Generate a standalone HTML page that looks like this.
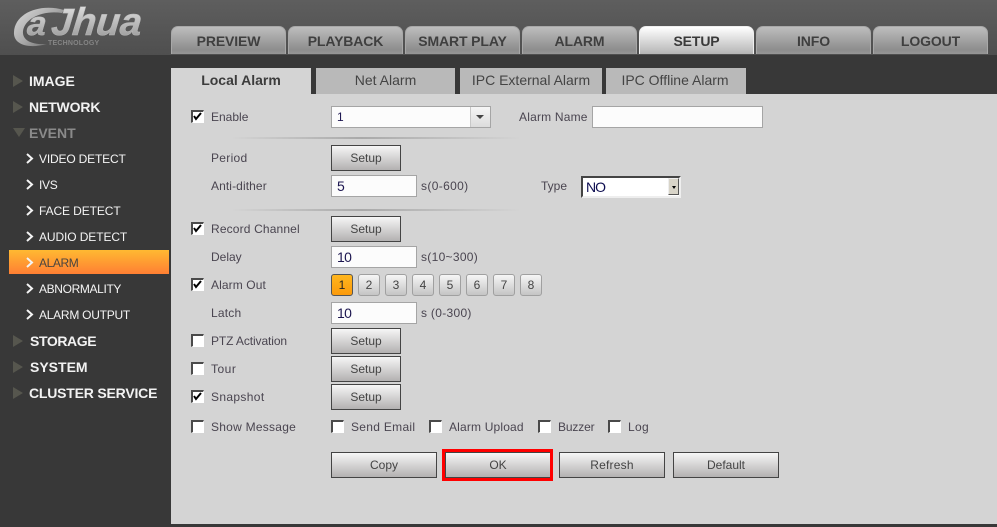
<!DOCTYPE html>
<html><head><meta charset="utf-8"><style>
html,body{margin:0;padding:0}
body{width:997px;height:527px;overflow:hidden;position:relative;background:#383838;font-family:"Liberation Sans",sans-serif;font-size:12px;color:#4a4550}
div,span.a,svg{position:absolute}
#hdr{left:0;top:0;width:997px;height:55px;background:linear-gradient(#5e5e5e,#4f4f4f)}
.tt{top:26px;width:115px;height:28px;box-sizing:border-box;border:1px solid #a8a8a8;border-bottom:none;border-radius:7px 7px 0 0;background:linear-gradient(#bdbdbd,#8d8d8d 85%,#969696);font:bold 14px/28px "Liberation Sans",sans-serif;letter-spacing:-.12px;color:#3f3f3f;text-align:center}
.tt.on{background:linear-gradient(#fff,#b5b5b5);border-color:#eee;color:#3a3a3a}
#panel{left:171px;top:94px;width:826px;height:430px;background:#d4d4d4}
.st{top:68px;height:26px;background:#b9b9b9;font:14px/25px "Liberation Sans",sans-serif;color:#444;text-align:center}
.m{left:29px;font:bold 14px/16px "Liberation Sans",sans-serif;color:#f2f2f2;white-space:nowrap}
.tri{width:0;height:0;border-left:10px solid #56564e;border-top:6px solid transparent;border-bottom:6px solid transparent;left:13px}
.s{left:39px;font:12px/16px "Liberation Sans",sans-serif;color:#f4f4f4;white-space:nowrap}
.l{font:12px/14px "Liberation Sans",sans-serif;color:#4a4550;white-space:nowrap}
.cb{width:10px;height:10px;background:#fff;border:2px solid #4a4a4a;border-right:1px solid #fff;border-bottom:1px solid #fff}
.btn{box-sizing:border-box;border:1px solid #444;background:linear-gradient(#f6f6f6,#b3b1b1);font:12px/24px "Liberation Sans",sans-serif;color:#444;text-align:center}
.in{box-sizing:border-box;border:1px solid #a5a5a5;background:#fcfcfc;height:22px;font:12px/20px "Liberation Sans",sans-serif;color:#1c1650;padding-left:5px}
.in.b{font-size:14px;letter-spacing:-.6px}
.n{top:274px;width:22px;height:22px;box-sizing:border-box;border:1px solid #a0a0a0;border-radius:3px;background:linear-gradient(#f6f6f6,#c4c4c4);font:12px/20px "Liberation Sans",sans-serif;color:#444;text-align:center}
.hr{height:2px;left:231px;width:290px;background:linear-gradient(90deg,#d4d4d4,#a9a9a9 45%,#b5b5b5 60%,#d4d4d4)}
</style></head><body>
<div id="hdr"></div>
<svg style="left:0;top:0" width="160" height="55">
<defs>
<linearGradient id="g" x1="0" y1="0" x2="0" y2="1"><stop offset="0" stop-color="#e6e6e6"/><stop offset="1" stop-color="#929292"/></linearGradient>
<linearGradient id="g2" gradientUnits="userSpaceOnUse" x1="14" y1="8" x2="50" y2="46"><stop offset="0" stop-color="#dcdcdc"/><stop offset=".6" stop-color="#a8a8a8"/><stop offset="1" stop-color="#6e6e6e"/></linearGradient>
</defs>
<path d="M64 10C40 3 15 13 14 32C13 45 29 49 47 44C33 45 22 41 23 31C25 18 43 10 62 13Z" fill="url(#g2)"/>
<g font-family="Liberation Sans" font-weight="bold" font-style="italic" fill="url(#g)" stroke="#b8b8b8" stroke-width=".5" transform="skewX(-6)">
<text x="30" y="35" font-size="34">a</text>
<text x="54" y="35" font-size="38">J</text>
<text x="75" y="35" font-size="39">hua</text>
</g>
<text x="48" y="45" font-family="Liberation Sans" font-weight="bold" font-size="7" fill="#858585" letter-spacing=".2">TECHNOLOGY</text>
</svg>

<div class="tt" style="left:171px">PREVIEW</div>
<div class="tt" style="left:288px">PLAYBACK</div>
<div class="tt" style="left:405px">SMART PLAY</div>
<div class="tt" style="left:522px">ALARM</div>
<div class="tt on" style="left:639px">SETUP</div>
<div class="tt" style="left:756px">INFO</div>
<div class="tt" style="left:873px">LOGOUT</div>

<div class="tri" style="top:75px"></div><div class="m" style="top:73px">IMAGE</div>
<div class="tri" style="top:101px"></div><div class="m" style="top:99px;letter-spacing:-.15px">NETWORK</div>
<div style="left:13px;top:128px;width:0;height:0;border-top:9px solid #56564e;border-left:6px solid transparent;border-right:6px solid transparent"></div><div class="m" style="top:125px;color:#8a8a8a">EVENT</div>
<div style="left:9px;top:250px;width:160px;height:24px;background:linear-gradient(#ffb932,#ff7f33)"></div>
<svg style="left:0;top:0" width="40" height="330" fill="none" stroke="#f4f4f4" stroke-width="2">
<path d="M27 154l5 4.5-5 4.5M27 180l5 4.5-5 4.5M27 206l5 4.5-5 4.5M27 232l5 4.5-5 4.5M27 258l5 4.5-5 4.5M27 284l5 4.5-5 4.5M27 310l5 4.5-5 4.5"/>
</svg>
<div class="s" style="top:151px;letter-spacing:-.17px">VIDEO DETECT</div>
<div class="s" style="top:177px;letter-spacing:-.3px">IVS</div>
<div class="s" style="top:203px;letter-spacing:-.1px">FACE DETECT</div>
<div class="s" style="top:229px;letter-spacing:-.1px">AUDIO DETECT</div>
<div class="s" style="top:255px;color:#4a4540;letter-spacing:-.4px">ALARM</div>
<div class="s" style="top:281px;letter-spacing:-.36px">ABNORMALITY</div>
<div class="s" style="top:307px;letter-spacing:-.25px">ALARM OUTPUT</div>
<div class="tri" style="top:335px"></div><div class="m" style="top:333px;left:30px;letter-spacing:-.4px">STORAGE</div>
<div class="tri" style="top:361px"></div><div class="m" style="top:359px;left:30px">SYSTEM</div>
<div class="tri" style="top:387px"></div><div class="m" style="top:385px;letter-spacing:-.2px">CLUSTER SERVICE</div>

<div id="panel"></div>
<div class="st" style="left:171px;width:140px;background:#d4d4d4;font-weight:bold;color:#3c3c3c;height:26px;line-height:25px">Local Alarm</div>
<div class="st" style="left:316px;width:139px">Net Alarm</div>
<div class="st" style="left:460px;width:142px">IPC External Alarm</div>
<div class="st" style="left:606px;width:140px;text-indent:-2px">IPC Offline Alarm</div>

<div class="cb" style="left:191px;top:110px"></div>
<div class="cb" style="left:191px;top:222px"></div>
<div class="cb" style="left:191px;top:278px"></div>
<div class="cb" style="left:191px;top:334px"></div>
<div class="cb" style="left:191px;top:362px"></div>
<div class="cb" style="left:191px;top:390px"></div>
<div class="cb" style="left:191px;top:420px"></div>
<div class="cb" style="left:331px;top:420px"></div>
<div class="cb" style="left:429px;top:420px"></div>
<div class="cb" style="left:538px;top:420px"></div>
<div class="cb" style="left:608px;top:420px"></div>
<svg style="left:0;top:0" width="210" height="410" fill="none" stroke="#000" stroke-width="2">
<path d="M194 116l2 3 5-6M194 228l2 3 5-6M194 284l2 3 5-6M194 396l2 3 5-6"/>
</svg>

<div class="l" style="left:211px;top:110px">Enable</div>
<div class="in" style="left:331px;top:106px;width:160px">1</div>
<div style="left:470px;top:107px;width:20px;height:20px;background:linear-gradient(#f6f6f6,#dcdcdc);border-left:1px solid #c8c8c8;box-sizing:border-box"></div>
<div style="left:476px;top:115px;width:0;height:0;border-top:4px solid #444;border-left:4px solid transparent;border-right:4px solid transparent"></div>
<div class="l" style="left:519px;top:110px;letter-spacing:.2px">Alarm Name</div>
<div class="in" style="left:592px;top:106px;width:171px"></div>
<div class="hr" style="top:137px"></div>

<div class="l" style="left:211px;top:151px;letter-spacing:.3px">Period</div>
<div class="btn" style="left:331px;top:145px;width:70px;height:26px">Setup</div>
<div class="l" style="left:211px;top:179px;letter-spacing:.1px">Anti-dither</div>
<div class="in b" style="left:331px;top:175px;width:86px">5</div>
<div class="l" style="left:421px;top:179px;letter-spacing:.35px">s(0-600)</div>
<div class="l" style="left:541px;top:179px">Type</div>
<div style="left:581px;top:176px;width:100px;height:22px;box-sizing:border-box;background:#fff;border:2px solid #444;border-right-color:#eee;border-bottom-color:#eee;font:14px/19px 'Liberation Sans',sans-serif;letter-spacing:-1px;color:#0c0c50;padding-left:3px">NO</div>
<div style="left:668px;top:178px;width:11px;height:17px;box-sizing:border-box;background:#d8d4c8;border:1px solid #555;border-top-color:#eee;border-left-color:#eee"></div>
<div style="left:672px;top:186px;width:0;height:0;border-top:3px solid #000;border-left:2px solid transparent;border-right:2px solid transparent"></div>
<div class="hr" style="top:209px"></div>

<div class="l" style="left:211px;top:222px;letter-spacing:.15px">Record Channel</div>
<div class="btn" style="left:331px;top:216px;width:70px;height:26px">Setup</div>
<div class="l" style="left:211px;top:250px">Delay</div>
<div class="in b" style="left:331px;top:246px;width:86px">10</div>
<div class="l" style="left:421px;top:250px;letter-spacing:.3px">s(10~300)</div>
<div class="l" style="left:211px;top:278px;letter-spacing:.1px">Alarm Out</div>
<div class="n" style="left:331px;background:linear-gradient(#ffb61e,#fb9a0c);border-color:#555;color:#222">1</div>
<div class="n" style="left:358px">2</div>
<div class="n" style="left:385px">3</div>
<div class="n" style="left:412px">4</div>
<div class="n" style="left:439px">5</div>
<div class="n" style="left:466px">6</div>
<div class="n" style="left:493px">7</div>
<div class="n" style="left:520px">8</div>
<div class="l" style="left:211px;top:306px;letter-spacing:.2px">Latch</div>
<div class="in b" style="left:331px;top:302px;width:86px">10</div>
<div class="l" style="left:421px;top:306px;letter-spacing:.3px">s (0-300)</div>
<div class="l" style="left:211px;top:334px;letter-spacing:-.1px">PTZ Activation</div>
<div class="btn" style="left:331px;top:328px;width:70px;height:26px">Setup</div>
<div class="l" style="left:211px;top:362px;letter-spacing:.5px">Tour</div>
<div class="btn" style="left:331px;top:356px;width:70px;height:26px">Setup</div>
<div class="l" style="left:211px;top:390px;letter-spacing:.35px">Snapshot</div>
<div class="btn" style="left:331px;top:384px;width:70px;height:26px">Setup</div>
<div class="l" style="left:211px;top:420px;letter-spacing:.25px">Show Message</div>
<div class="l" style="left:351px;top:420px;letter-spacing:.3px">Send Email</div>
<div class="l" style="left:449px;top:420px;letter-spacing:.17px">Alarm Upload</div>
<div class="l" style="left:558px;top:420px;letter-spacing:-.15px">Buzzer</div>
<div class="l" style="left:628px;top:420px;letter-spacing:.3px">Log</div>

<div class="btn" style="left:331px;top:452px;width:106px;height:26px">Copy</div>
<div class="btn" style="left:445px;top:452px;width:106px;height:26px">OK</div>
<div class="btn" style="left:559px;top:452px;width:106px;height:26px;letter-spacing:.2px">Refresh</div>
<div class="btn" style="left:673px;top:452px;width:106px;height:26px">Default</div>
<div style="left:442px;top:449px;width:111px;height:32px;box-sizing:border-box;border:3px solid #f00"></div>
</body></html>
